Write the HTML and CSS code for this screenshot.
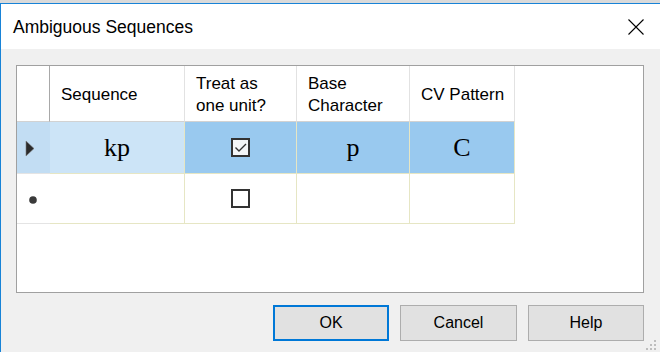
FILE: index.html
```html
<!DOCTYPE html>
<html lang="en">
<head>
    <meta charset="UTF-8">
    <title>Ambiguous Sequences</title>
    <link rel="stylesheet" href="styles.css">
</head>
<body>
    <div class="behind"></div>
    <div class="window">
        <div class="titlebar">
            <span class="title">Ambiguous Sequences</span>
            <svg class="close" width="16" height="16" viewBox="0 0 16 16">
                <path d="M0.5 0.5 L15.5 15.5 M15.5 0.5 L0.5 15.5" stroke="#000" stroke-width="1.1" fill="none"/>
            </svg>
        </div>

        <div class="content">
            <div class="grid">
                <div class="sheet">
                    <!-- header row -->
                    <div class="hcell corner"></div>
                    <div class="hcell">Sequence</div>
                    <div class="hcell">Treat as<br>one unit?</div>
                    <div class="hcell">Base<br>Character</div>
                    <div class="hcell">CV Pattern</div>

                    <!-- current row -->
                    <div class="rowhead current">
                        <svg width="10" height="17" viewBox="0 0 10 17">
                            <polygon points="1,1 9,8.5 1,16" fill="#2b2b2b" stroke="#7a7a7a" stroke-width="0.6"/>
                        </svg>
                    </div>
                    <div class="cell light">kp</div>
                    <div class="cell picked">
                        <svg class="box" width="19" height="19" viewBox="0 0 19 19">
                            <rect x="1" y="1" width="17" height="17" fill="#f4f6f8" stroke="#333" stroke-width="2"/>
                            <path d="M4.5 9.5 L8 13 L15 6" stroke="#333" stroke-width="1.4" fill="none"/>
                        </svg>
                    </div>
                    <div class="cell picked">p</div>
                    <div class="cell picked">C</div>

                    <!-- new row -->
                    <div class="rowhead">
                        <svg class="star" width="10" height="10" viewBox="0 0 10 10">
                            <circle cx="5" cy="5" r="3.8" fill="#3a3a3a"/>
                        </svg>
                    </div>
                    <div class="cell"></div>
                    <div class="cell">
                        <svg class="box" width="19" height="19" viewBox="0 0 19 19">
                            <rect x="1" y="1" width="17" height="17" fill="#fff" stroke="#333" stroke-width="2"/>
                        </svg>
                    </div>
                    <div class="cell"></div>
                    <div class="cell"></div>
                </div>
            </div>

            <div class="buttons">
                <button class="btn default">OK</button>
                <button class="btn wide">Cancel</button>
                <button class="btn">Help</button>
            </div>
        </div>

        <svg class="grip" width="12" height="12" viewBox="0 0 12 12">
            <rect x="9" y="1" width="2" height="2" fill="#bdbdbd"/>
            <rect x="5" y="5" width="2" height="2" fill="#bdbdbd"/>
            <rect x="9" y="5" width="2" height="2" fill="#bdbdbd"/>
            <rect x="1" y="9" width="2" height="2" fill="#bdbdbd"/>
            <rect x="5" y="9" width="2" height="2" fill="#bdbdbd"/>
            <rect x="9" y="9" width="2" height="2" fill="#bdbdbd"/>
        </svg>
    </div>
</body>
</html>
```

FILE: styles.css
```css
body {
    margin: 0;
    width: 660px;
    height: 352px;
    overflow: hidden;
    font-family: 'Liberation Sans', Arial, sans-serif;
    color: #000;
    background-color: #f0f0f0;
}
.behind {
    height: 3px;
    background-color: #dadada;
}
.window {
    position: relative;
    height: 349px;
    border-top: 1px solid #1883d7;
    border-left: 1px solid #1883d7;
    background-color: #f0f0f0;
}
.titlebar {
    height: 45px;
    background-color: #fff;
    display: flex;
    align-items: center;
    justify-content: space-between;
    padding: 0 16px 0 12px;
}
.title {
    font-size: 17.5px;
    margin-top: 1px;
}
.close {
    display: block;
    margin-top: 1px;
}
.content {
    padding: 16px 16px 0 15px;
}
.grid {
    width: 628px;
    height: 228px;
    box-sizing: border-box;
    border: 1px solid #a0a0a0;
    background-color: #fff;
}
.sheet {
    display: grid;
    grid-template-columns: 33px 135px 112px 113px 105px;
    grid-template-rows: 56px 52px 50px;
    width: 498px;
}
.hcell {
    box-sizing: border-box;
    border-right: 1px solid #e2e2e2;
    border-bottom: 1px solid #d2d2d2;
    padding: 3px 8px 0 11px;
    font-size: 17px;
    line-height: 22px;
    display: flex;
    align-items: center;
    background-color: #fff;
}
.hcell.corner {
    border-right-color: #a8a8a8;
}
.rowhead {
    box-sizing: border-box;
    border-bottom: 1px solid #e4e4e4;
    display: flex;
    align-items: center;
    padding-left: 8px;
    background-color: #fff;
}
.rowhead.current {
    background-color: #c2ddf3;
}
.rowhead.current svg {
    margin-top: 2px;
}
.rowhead .star {
    margin-left: 3px;
    margin-top: 3px;
}
.cell {
    box-sizing: border-box;
    border-right: 1px solid #e6e6c4;
    border-bottom: 1px solid #e6e6c4;
    display: flex;
    align-items: center;
    justify-content: center;
    font-family: 'Liberation Serif', 'Times New Roman', serif;
    font-size: 26px;
}
.cell.light {
    background-color: #cce4f7;
}
.cell.picked {
    background-color: #99c9ef;
}
.box {
    display: block;
}
.buttons {
    display: flex;
    justify-content: flex-end;
    gap: 11px;
    margin-top: 12px;
}
.btn {
    width: 116px;
    height: 36px;
    box-sizing: border-box;
    background-color: #e1e1e1;
    border: 1px solid #adadad;
    font-family: 'Liberation Sans', Arial, sans-serif;
    font-size: 16px;
    color: #000;
    padding: 0;
}
.btn.wide {
    width: 117px;
}
.btn.default {
    border: 2px solid #0078d7;
}
.grip {
    position: absolute;
    right: 3px;
    bottom: 2px;
}
```
